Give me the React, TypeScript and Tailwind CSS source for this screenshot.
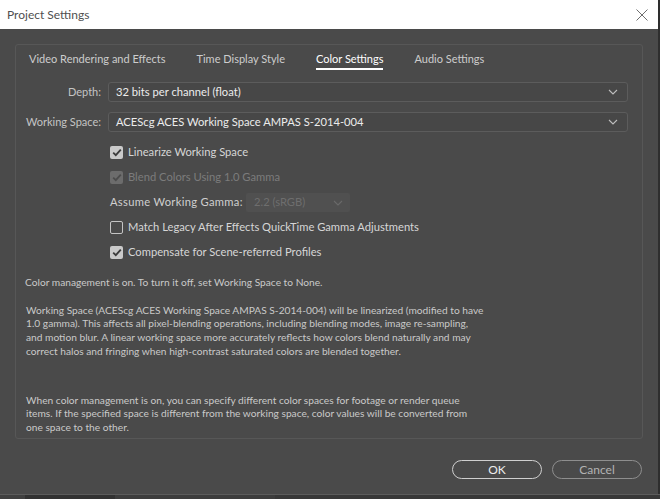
function Chevron({ color = "#bdbdbd" }: { color?: string }) {
  return (
    <svg width="10" height="6" viewBox="0 0 10 6" fill="none">
      <path d="M1 1 L5 5 L9 1" stroke={color} strokeWidth="1.1" />
    </svg>
  );
}

function Select({ value, width }: { value: string; width: string }) {
  return (
    <div
      className={`${width} h-[20px] flex items-center justify-between pl-[7px] pr-[9px] bg-[#474747] border border-[#5c5c5c] rounded-[3px]`}
    >
      <span className="text-[11.2px] text-[#ececec]">{value}</span>
      <Chevron />
    </div>
  );
}

function Check({ checked, disabled, label }: { checked: boolean; disabled?: boolean; label: string }) {
  return (
    <div className="h-[25px] flex items-center pl-[94px]">
      {checked ? (
        <div
          className={`w-[13px] h-[13px] rounded-[2px] flex items-center justify-center ${
            disabled ? "bg-[#6c6c6c]" : "bg-[#cacaca]"
          }`}
        >
          <svg width="10" height="9" viewBox="0 0 10 9" fill="none">
            <path d="M1.2 4.6 L3.8 7.2 L8.8 1.6" stroke={disabled ? "#4c4c4c" : "#3c3c3c"} strokeWidth="1.8" />
          </svg>
        </div>
      ) : (
        <div className="w-[13px] h-[13px] rounded-[2px] border-[1.5px] border-[#c4c4c4]" />
      )}
      <span className={`ml-[5px] text-[11.2px] ${disabled ? "text-[#7c7c7c]" : "text-[#d6d6d6]"}`}>{label}</span>
    </div>
  );
}

export default function App() {
  const tabs = ["Video Rendering and Effects", "Time Display Style", "Color Settings", "Audio Settings"];
  return (
    <div className="w-[660px] h-[499px] bg-[#2e2e2e] overflow-hidden font-['Lato',sans-serif] flex flex-col">
      <div className="w-[658px] h-[494px] flex flex-col">
        {/* title bar */}
        <div className="h-[29px] bg-white flex items-center justify-between pl-[7px] pr-[10px]">
          <span className="text-[12px] text-[#4f4f4f]">Project Settings</span>
          <svg width="12" height="12" viewBox="0 0 12 12" fill="none">
            <path d="M0.5 0.5 L11.5 11.5 M11.5 0.5 L0.5 11.5" stroke="#6e6e6e" strokeWidth="1" />
          </svg>
        </div>

        <div className="flex-1 bg-[#4a4a4a] pt-[15px] pl-[15px] pr-[15px] flex flex-col">
          {/* group panel */}
          <div className="h-[395px] border border-[#575757] rounded-[3px] flex flex-col">
            <div className="flex gap-[31px] pl-[13px]">
              {tabs.map((t) => (
                <div
                  key={t}
                  className={`pt-[6px] pb-[1px] border-b-2 text-[11px] leading-[16px] ${
                    t === "Color Settings" ? "border-white text-white" : "border-transparent text-[#cdcdcd]"
                  }`}
                >
                  {t}
                </div>
              ))}
            </div>

            <div className="mt-[12px] flex items-center gap-[7px]">
              <span className="w-[85px] text-right text-[11px] text-[#c4c4c4]">Depth:</span>
              <Select value="32 bits per channel (float)" width="w-[520px]" />
            </div>
            <div className="mt-[10px] flex items-center gap-[7px]">
              <span className="w-[85px] text-right text-[11px] text-[#c4c4c4]">Working Space:</span>
              <Select value="ACEScg ACES Working Space AMPAS S-2014-004" width="w-[520px]" />
            </div>

            <div className="mt-[8px] flex flex-col">
              <Check checked label="Linearize Working Space" />
              <Check checked disabled label="Blend Colors Using 1.0 Gamma" />
              <div className="h-[25px] flex items-center pl-[94px]">
                <span className="w-[136px] shrink-0 whitespace-nowrap text-[11.2px] tracking-[0.3px] text-[#cfcfcf]">
                  Assume Working Gamma:
                </span>
                <div className="w-[104px] h-[19px] bg-[#505050] rounded-[2px] flex items-center justify-between pl-[8px] pr-[7px]">
                  <span className="text-[11.2px] text-[#6e6e6e]">2.2 (sRGB)</span>
                  <Chevron color="#6a6a6a" />
                </div>
              </div>
              <Check checked={false} label="Match Legacy After Effects QuickTime Gamma Adjustments" />
              <Check checked label="Compensate for Scene-referred Profiles" />
            </div>

            <div className="mt-[11px] pl-[9px] pr-[10px] text-[10.2px] leading-[13.7px] text-[#c9c9c9]">
              <p>Color management is on. To turn it off, set Working Space to None.</p>
              <p className="mt-[14px] pl-[1px]">
                Working Space (ACEScg ACES Working Space AMPAS S-2014-004) will be linearized (modified to have
                <br />
                1.0 gamma). This affects all pixel-blending operations, including blending modes, image re-sampling,
                <br />
                and motion blur. A linear working space more accurately reflects how colors blend naturally and may
                <br />
                correct halos and fringing when high-contrast saturated colors are blended together.
              </p>
              <p className="mt-[35px] pl-[1px]">
                When color management is on, you can specify different color spaces for footage or render queue
                <br />
                items. If the specified space is different from the working space, color values will be converted from
                <br />
                one space to the other.
              </p>
            </div>
          </div>

          {/* buttons */}
          <div className="mt-[21px] flex justify-end gap-[10px] pr-[1px]">
            <button className="w-[90px] h-[19px] rounded-full border-[1.5px] border-[#cfcfcf] text-[12px] leading-none text-[#ececec]">
              OK
            </button>
            <button className="w-[90px] h-[19px] rounded-full border-[1.5px] border-[#8e8e8e] text-[12px] leading-none text-[#b3b3b3]">
              Cancel
            </button>
          </div>
        </div>
      </div>

      {/* window underneath */}
      <div className="h-[5px] flex border-t border-[#5c5c5c]">
        <div className="w-[25px] bg-[#404040]" />
        <div className="w-[90px] bg-[#323232]" />
        <div className="w-[160px] bg-[#3d3d3d]" />
        <div className="flex-1 bg-[#383838]" />
      </div>
    </div>
  );
}
